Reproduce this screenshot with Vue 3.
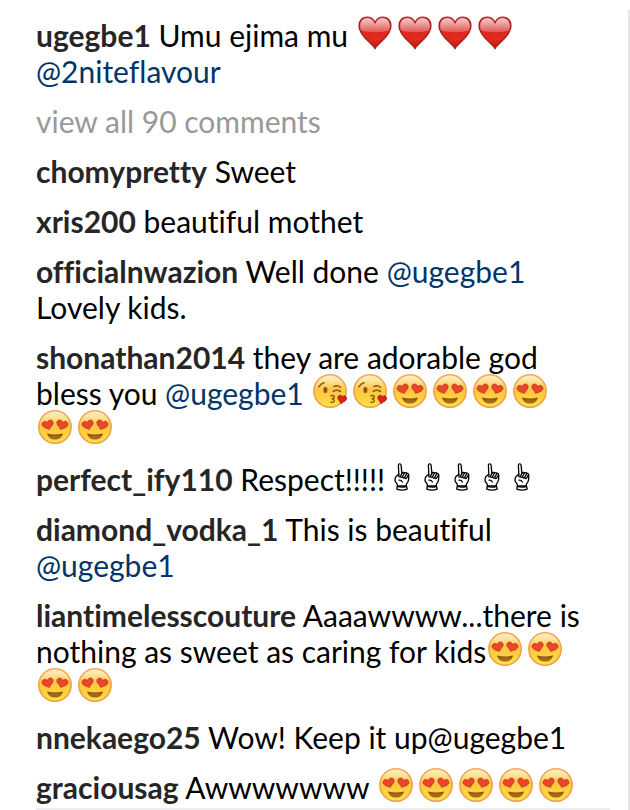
<script setup>
const comments = [
  {
    user: 'ugegbe1',
    parts: [
      { text: 'Umu ejima mu ' },
      { icon: 'heart', count: 4, label: 'red heart' },
      { text: ' ' },
      { mention: '2niteflavour' }
    ]
  },
  { user: 'chomypretty', parts: [{ text: 'Sweet' }] },
  { user: 'xris200', parts: [{ text: 'beautiful mothet' }] },
  {
    user: 'officialnwazion',
    parts: [{ text: 'Well done ' }, { mention: 'ugegbe1' }, { text: ' Lovely kids.' }]
  },
  {
    user: 'shonathan2014',
    parts: [
      { text: 'they are adorable god bless you ' },
      { mention: 'ugegbe1' },
      { text: ' ' },
      { icon: 'kiss', count: 2, label: 'face blowing a kiss' },
      { icon: 'love', count: 6, label: 'smiling face with heart eyes' }
    ]
  },
  {
    user: 'perfect_ify110',
    parts: [{ text: 'Respect!!!!! ' }, { icon: 'point', count: 5, label: 'index pointing up' }]
  },
  { user: 'diamond_vodka_1', parts: [{ text: 'This is beautiful ' }, { mention: 'ugegbe1' }] },
  {
    user: 'liantimelesscouture',
    parts: [
      { text: 'Aaaawwww...there is nothing as sweet as caring for kids' },
      { icon: 'love', count: 4, label: 'smiling face with heart eyes' }
    ]
  },
  { user: 'nnekaego25', parts: [{ text: 'Wow! Keep it up@ugegbe1' }] },
  {
    user: 'graciousag',
    parts: [{ text: 'Awwwwwww ' }, { icon: 'love', count: 5, label: 'smiling face with heart eyes' }]
  }
]
</script>

<template>
  <svg class="defs" aria-hidden="true">
    <defs>
      <linearGradient id="heart-fill" x1="0" y1="0" x2="0" y2="1">
        <stop offset="0" stop-color="#d0484c" />
        <stop offset="0.45" stop-color="#dc2a20" />
        <stop offset="0.7" stop-color="#e02a1c" />
        <stop offset="1" stop-color="#b81912" />
      </linearGradient>
      <linearGradient id="heart-gloss" x1="0" y1="0" x2="0" y2="1">
        <stop offset="0" stop-color="#fff" stop-opacity="0.72" />
        <stop offset="1" stop-color="#fff" stop-opacity="0.2" />
      </linearGradient>
      <linearGradient id="face-fill" x1="0" y1="0" x2="0" y2="1">
        <stop offset="0" stop-color="#fff0c4" />
        <stop offset="0.2" stop-color="#fde39a" />
        <stop offset="0.42" stop-color="#fdc548" />
        <stop offset="0.75" stop-color="#ffd23c" />
        <stop offset="1" stop-color="#ffe353" />
      </linearGradient>
      <linearGradient id="face-rim" x1="0" y1="0" x2="0" y2="1">
        <stop offset="0" stop-color="#f3a75c" />
        <stop offset="1" stop-color="#f09a3c" />
      </linearGradient>
      <linearGradient id="mouth-fill" x1="0" y1="0" x2="0" y2="1">
        <stop offset="0" stop-color="#7a4312" />
        <stop offset="0.5" stop-color="#a9691c" />
        <stop offset="1" stop-color="#a5641c" />
      </linearGradient>
    </defs>

    <symbol id="heart" viewBox="0 0 34 34">
      <path
        d="M17 32.6C13.5 27 1 19.5 1 9.5C1 4.2 4.8 1 9.2 1C12.9 1 15.6 3.2 17 6.4C18.4 3.2 21.1 1 24.8 1C29.2 1 33 4.2 33 9.5C33 19.5 20.5 27 17 32.6Z"
        fill="url(#heart-fill)"
        stroke="#a32020"
        stroke-width="1.2"
      />
      <path
        d="M2.2 10.5C2.2 5.2 5.3 2.3 9.2 2.3C13 2.3 15.8 5 17 8.6C18.2 5 21 2.3 24.8 2.3C28.7 2.3 31.8 5.2 31.8 10.5C31.8 12 31.5 13.4 31 14.6C24 16.8 10 16.8 3 14.6C2.5 13.4 2.2 12 2.2 10.5Z"
        fill="url(#heart-gloss)"
      />
    </symbol>

    <symbol id="love" viewBox="0 0 34 34">
      <circle cx="17" cy="17" r="16.2" fill="url(#face-fill)" stroke="url(#face-rim)" stroke-width="1.5" />
      <path
        d="M11.4 19.4C9.2 18.4 4 17.6 4.1 14.2C4.2 11.3 7.6 10.6 9.3 12.8C9.9 9.6 14 9 15 11.9C15.8 14.8 12.2 16.6 11.4 19.4Z"
        fill="#ee4528"
        stroke="#b6331d"
        stroke-width="0.8"
      />
      <path
        d="M22.6 19.4C24.8 18.4 30 17.6 29.9 14.2C29.8 11.3 26.4 10.6 24.7 12.8C24.1 9.6 20 9 19 11.9C18.2 14.8 21.8 16.6 22.6 19.4Z"
        fill="#ee4528"
        stroke="#b6331d"
        stroke-width="0.8"
      />
      <path d="M9 23.6Q17 25.4 25 23.6Q23.7 29.6 17 29.6Q10.3 29.6 9 23.6Z" fill="url(#mouth-fill)" />
    </symbol>

    <symbol id="kiss" viewBox="0 0 34 34">
      <circle cx="17" cy="17" r="16.2" fill="url(#face-fill)" stroke="url(#face-rim)" stroke-width="1.5" />
      <g fill="none" stroke="#8a5518" stroke-width="1.4" stroke-linecap="round">
        <path d="M5.8 12.8Q7.6 9.6 11.2 8.8" />
        <path d="M20.8 12.6Q24.4 10.8 27.6 13.2" />
        <path d="M20.4 17.2Q23.8 15.2 27.4 17.4" stroke-width="1.7" />
        <path d="M18 21.8Q21.4 21 21.4 22.9Q21.2 24.6 18.6 24.9Q21.6 25.3 21.2 27.2Q20.8 28.8 17.8 28.2" />
      </g>
      <ellipse cx="12.4" cy="16" rx="2" ry="2.9" fill="#8a5518" />
      <path
        d="M28 29.8C27.6 27.6 24.6 26 24.9 23.3C25.4 20.8 28.7 20.7 29.4 23.1C30.8 21 33.7 21.7 33.6 24.4C33.4 27.4 29.8 27.6 28 29.8Z"
        fill="#d9231c"
        stroke="#a31a14"
        stroke-width="0.8"
      />
    </symbol>

    <symbol id="point" viewBox="0 0 16 28">
      <g fill="#fff" stroke="#000" stroke-width="1.3" stroke-linejoin="round" stroke-linecap="round">
        <path d="M3.4 23L3.2 21.2L1.2 18.4Q0.6 15 2.2 13.2L4.8 11.4L4.4 2.2Q4.4 0.8 5.7 0.8Q7 0.8 7.1 2.2L7.9 10.4Q9.4 8.8 10.6 10Q12 9 13 10.4Q14.8 10.2 14.8 12.6L14.6 16.6Q14.2 19.4 12.4 21L12.4 23Z" />
        <path d="M4.8 11.4L5 14.2M7.9 10.4L6.4 13.4Q7.2 15.4 8.6 13.4L10.6 10M8.6 13.4Q9.2 16.4 10.8 14.2L13 10.4M10.8 14.2Q11.6 17 13 14.4L14.4 12M5 17.2Q7.4 17 8.4 19" fill="none" />
        <path d="M3.2 23.4Q8 25 12.6 23.4L13.2 26.2Q8 28.2 2.8 26.2Z" />
      </g>
    </symbol>
  </svg>

  <main class="panel">
    <ul class="comments">
      <template v-for="(comment, index) in comments" :key="comment.user">
        <li class="comment">
          <a class="user" href="#">{{ comment.user }}</a>{{ ' ' }}<template
            v-for="(part, p) in comment.parts"
            :key="p"
          ><a v-if="part.mention" class="mention" href="#">@{{ part.mention }}</a><template
            v-else-if="part.icon"
          ><svg
            v-for="n in part.count"
            :key="n"
            class="emoji"
            :class="part.icon"
            role="img"
            :aria-label="part.label"
          ><use :href="'#' + part.icon" /></svg></template><template v-else>{{ part.text }}</template></template>
        </li>
        <li v-if="index === 0" class="comment">
          <a class="more" href="#">view all 90 comments</a>
        </li>
      </template>
    </ul>
  </main>
</template>

<style>
body {
  background: #fff;
}
</style>

<style scoped>
.defs {
  position: absolute;
  width: 0;
  height: 0;
}

.panel {
  margin-top: 10px;
  padding: 7px 18px 0 36px;
  border-right: 2px solid #e6e6e6;
  font-family: Lato, "Liberation Sans", sans-serif;
  font-size: 30px;
  font-variant-ligatures: none;
  line-height: 36px;
  color: #000;
}

.comments {
  display: flex;
  flex-direction: column;
  gap: 14px;
  margin: 0;
  padding: 0 24px 3px 0;
  border-bottom: 2px solid #ededed;
  list-style: none;
}

.comment a {
  text-decoration: none;
}

.user {
  font-weight: 700;
  color: #262626;
}

.mention {
  color: #003569;
}

.comment .more {
  color: #999;
}

.emoji {
  display: inline-block;
  width: 34px;
  height: 34px;
  margin: -4px 4px -4px 2px;
  vertical-align: 1px;
}

.emoji.point {
  width: 16px;
  height: 28px;
  margin: 0 13px 0 1px;
  vertical-align: 0;
}
</style>
